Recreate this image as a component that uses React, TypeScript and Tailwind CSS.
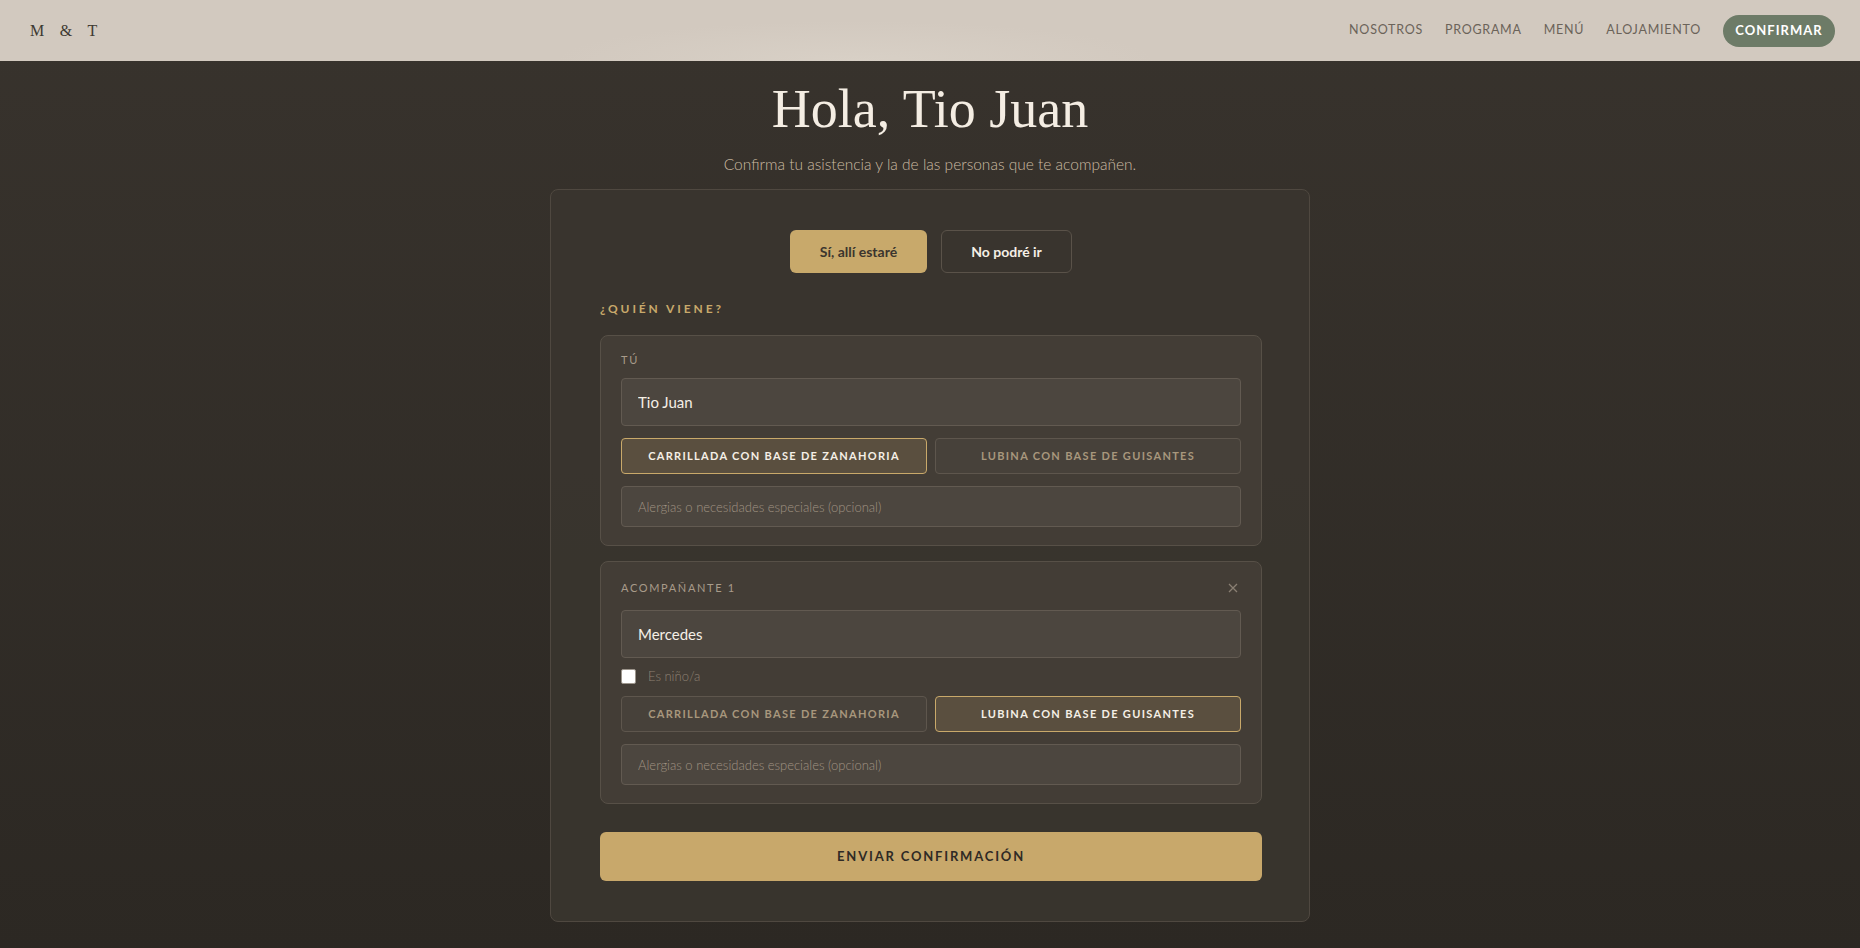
import { useState } from "react";

const sans = "font-['Lato','Noto_Sans',sans-serif]";
const serif = "font-['Liberation_Serif','DejaVu_Serif',serif]";

const DISHES = ["Carrillada con base de zanahoria", "Lubina con base de guisantes"];

function DishPicker({ value, onChange }: { value: number; onChange: (i: number) => void }) {
  return (
    <div className="mt-3 grid grid-cols-2 gap-2">
      {DISHES.map((d, i) => (
        <button
          key={d}
          onClick={() => onChange(i)}
          className={
            value === i
              ? "h-9 rounded-[4px] border border-[#c9a96a] bg-[#5a4f3f] text-[11px] font-bold uppercase tracking-[0.12em] text-[#f5efe6]"
              : "h-9 rounded-[4px] border border-[#5e564d] bg-[#47413a] text-[11px] font-bold uppercase tracking-[0.12em] text-[#a8977d]"
          }
        >
          {d}
        </button>
      ))}
    </div>
  );
}

function TextBox({ value, placeholder, tall }: { value?: string; placeholder?: string; tall?: boolean }) {
  return (
    <input
      defaultValue={value}
      placeholder={placeholder}
      className={
        tall
          ? "h-12 w-full rounded-[4px] border border-[#625a51] bg-[#4c463f] px-4 text-[15px] text-[#f5efe6] outline-none"
          : "mt-3 h-[41px] w-full rounded-[4px] border border-[#625a51] bg-[#4c463f] px-4 text-[13px] font-light text-[#f5efe6] outline-none placeholder:text-[#a09383]"
      }
    />
  );
}

export default function App() {
  const [going, setGoing] = useState(true);
  const [dishes, setDishes] = useState([0, 1]);

  const pick = (who: number) => (i: number) =>
    setDishes((prev) => prev.map((v, k) => (k === who ? i : v)));

  return (
    <div className={`${sans} min-h-screen bg-gradient-to-b from-[#38332d] to-[#2c2823]`}>
      <header className="flex h-[61px] items-center justify-between bg-[#d2c9bf] bg-[radial-gradient(ellipse_300px_40px_at_46%_100%,#d8d0c6,transparent)] pl-[30px] pr-[25px]">
        <span className={`${serif} text-[16px] tracking-[0.36em] text-[#3e3932]`}>M &amp; T</span>
        <nav className="flex items-center gap-[22px] text-[12.5px] uppercase tracking-[0.06em] text-[#6b6359]">
          <a href="#nosotros">Nosotros</a>
          <a href="#programa">Programa</a>
          <a href="#menu">Menú</a>
          <a href="#alojamiento">Alojamiento</a>
          <a
            href="#confirmar"
            className="flex h-8 w-[112px] items-center justify-center rounded-full bg-[#6d7b67] text-[13px] font-bold tracking-[0.08em] text-white"
          >
            Confirmar
          </a>
        </nav>
      </header>

      <main className="flex flex-col items-center pb-7">
        <h1 className={`${serif} mt-[19px] text-[54px] leading-[1.1] text-[#f4ede3]`}>Hola, Tio Juan</h1>
        <p className="mt-[13px] text-[15.5px] font-light leading-6 text-[#cbbba2]">
          Confirma tu asistencia y la de las personas que te acompañen.
        </p>

        <section className="mt-[13px] w-[760px] rounded-lg border border-[#4f4840] bg-[#3a352f]/90 pb-10 pl-[49px] pr-[47px] pt-10">
          <div className="flex justify-center gap-[14px]">
            <button
              onClick={() => setGoing(true)}
              className={
                going
                  ? "h-[43px] w-[137px] rounded-md bg-[#c8a96b] text-[14px] font-bold text-[#3b352e]"
                  : "h-[43px] w-[137px] rounded-md border border-[#5a5249] text-[14px] font-bold text-[#f5efe6]"
              }
            >
              Sí, allí estaré
            </button>
            <button
              onClick={() => setGoing(false)}
              className={
                !going
                  ? "h-[43px] w-[131px] rounded-md bg-[#c8a96b] text-[14px] font-bold text-[#3b352e]"
                  : "h-[43px] w-[131px] rounded-md border border-[#5a5249] text-[14px] font-bold text-[#f5efe6]"
              }
            >
              No podré ir
            </button>
          </div>

          <h2 className="mt-7 text-[12px] font-bold uppercase leading-4 tracking-[0.24em] text-[#c8a96b]">
            ¿Quién viene?
          </h2>

          <div className="mt-[18px] flex flex-col gap-[15px]">
            <div className="rounded-lg border border-[#575047] bg-[#433d36] px-5 pb-[18px] pt-[18px]">
              <div className="mb-3 text-[11px] uppercase leading-3 tracking-[0.15em] text-[#a89b8a]">Tú</div>
              <TextBox value="Tio Juan" tall />
              <DishPicker value={dishes[0]} onChange={pick(0)} />
              <TextBox placeholder="Alergias o necesidades especiales (opcional)" />
            </div>

            <div className="rounded-lg border border-[#575047] bg-[#433d36] px-5 pb-[18px] pt-4">
              <div className="mb-3 flex h-5 items-center justify-between">
                <span className="text-[11px] uppercase tracking-[0.15em] text-[#a89b8a]">Acompañante 1</span>
                <button className="-mr-0.5 flex h-5 w-5 items-center justify-center text-[#8a7f73]" aria-label="Quitar">
                  <svg width="10" height="10" viewBox="0 0 10 10" stroke="currentColor" strokeWidth="1.3">
                    <path d="M1 1l8 8M9 1l-8 8" />
                  </svg>
                </button>
              </div>
              <TextBox value="Mercedes" tall />
              <label className="mt-[10px] flex h-4 items-center gap-3 text-[13px] font-light text-[#8f8273]">
                <span className="h-[15px] w-[15px] rounded-[2px] border border-[#9c958c] bg-white" />
                Es niño/a
              </label>
              <DishPicker value={dishes[1]} onChange={pick(1)} />
              <TextBox placeholder="Alergias o necesidades especiales (opcional)" />
            </div>
          </div>

          <button className="mt-7 h-[49px] w-full rounded-md bg-[#c8a86b] text-[13px] font-bold uppercase tracking-[0.14em] text-[#2f2a25]">
            Enviar confirmación
          </button>
        </section>
      </main>
    </div>
  );
}
